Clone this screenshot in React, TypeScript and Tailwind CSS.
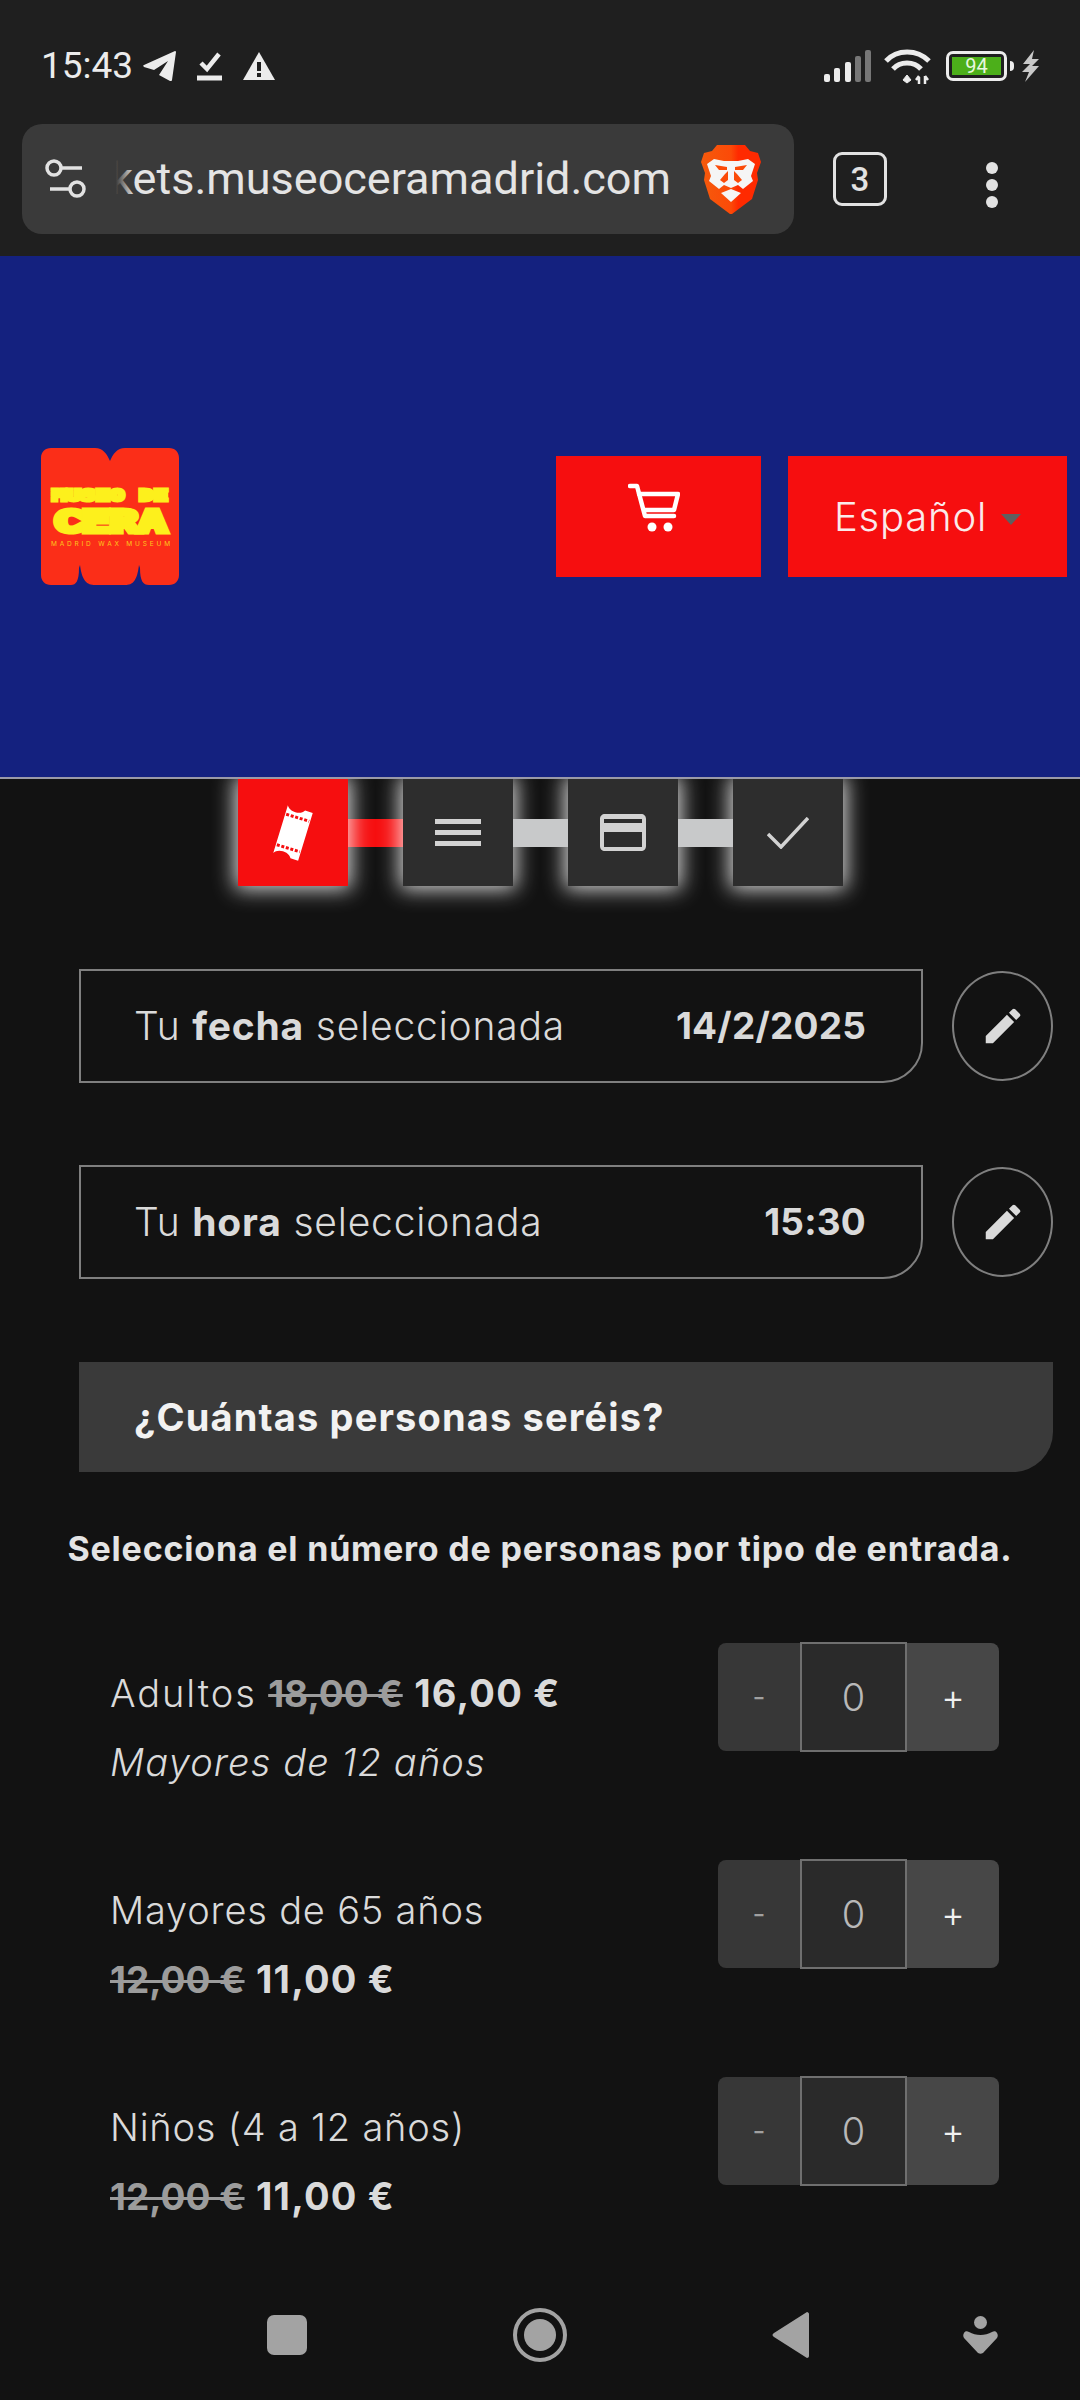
import { MdEdit } from "react-icons/md";

const StatusBar = () => (
  <div className="flex h-[124px] items-start justify-between pl-[41px] pr-[40px] pt-[48px]">
    <div className="flex items-center">
      <span className="font-['Roboto',sans-serif] text-[37px] leading-[36px] text-[#ececec]">15:43</span>
      <svg className="ml-[10px]" width="33" height="30" viewBox="0 0 33 30" fill="#ececec">
        <path d="M1 14 L32 0 C33 0 33 1 33 1 L29 29 C29 30 28 30 27 30 L16 24 L25 10 L11 19 L1 16 C0 15 0 14 1 14 Z" />
      </svg>
      <svg className="ml-[21px]" width="25" height="30" viewBox="0 0 25 30" fill="none" stroke="#ececec">
        <path d="M4 12 L10 18 L22 3" strokeWidth="4.5" />
        <path d="M0 27 H25" strokeWidth="5" />
      </svg>
      <svg className="ml-[21px]" width="32" height="28" viewBox="0 0 32 28">
        <path d="M16 0 L32 28 H0 Z" fill="#ececec" />
        <path d="M14 10 H18 V19 H14 Z M14 21 H18 V25 H14 Z" fill="#1f1f1f" />
      </svg>
    </div>
    <div className="flex items-center">
      <svg width="47" height="32" viewBox="0 0 47 32">
        <rect x="0" y="24" width="6" height="8" rx="2" fill="#ececec" />
        <rect x="10" y="18" width="6" height="14" rx="2" fill="#ececec" />
        <rect x="21" y="12" width="6" height="20" rx="2" fill="#ececec" />
        <rect x="31" y="6" width="6" height="26" rx="2" fill="#777" />
        <rect x="41" y="0" width="6" height="32" rx="2" fill="#777" />
      </svg>
      <svg className="ml-[13px]" width="47" height="36" viewBox="0 0 47 36" fill="none" stroke="#ececec" strokeWidth="5">
        <path d="M2 13 C13 1 33 1 45 13" />
        <path d="M9 21 C16 13 30 13 37 21" />
        <path d="M19 32 L23 27 L27 32 L23 35 Z" fill="#ececec" strokeWidth="1" />
        <path d="M35 36 V29 M32 32 L35 28 M41 36 V28 M41 28 L44 32" strokeWidth="2.5" />
      </svg>
      <div className="ml-[15px] flex h-[30px] w-[61px] items-center justify-center rounded-[7px] border-[3px] border-[#ececec] bg-[#1f1f1f] px-[3px]">
        <div className="flex h-[18px] w-full items-center justify-center bg-[#4caf1a] font-['Roboto',sans-serif] text-[20px] leading-none text-[#e8f8e0]">
          94
        </div>
      </div>
      <div className="ml-[3px] h-[10px] w-[4px] rounded-r-sm bg-[#ececec]" />
      <svg className="ml-[8px]" width="18" height="32" viewBox="0 0 18 32" fill="#c8c8c8">
        <path d="M12 0 L1 14 H8 L0 22 H7 L3 32 L17 16 H10 L17 9 H10 Z" />
      </svg>
    </div>
  </div>
);

const BraveLion = () => (
  <svg className="shrink-0" width="60" height="71" viewBox="0 0 60 71">
    <defs>
      <linearGradient id="shield" x1="0" x2="1" y1="0" y2="0">
        <stop offset="0" stopColor="#f55a0c" />
        <stop offset="0.5" stopColor="#fb4a08" />
        <stop offset="0.62" stopColor="#ff2a00" />
        <stop offset="1" stopColor="#ff2a00" />
      </linearGradient>
    </defs>
    <path
      d="M16 1 H44 L49 7 L57 9 L60 18 L56 29 L57 36 L51 55 L31 70 H29 L9 55 L3 36 L4 29 L0 18 L3 9 L11 7 Z"
      fill="url(#shield)"
    />
    <path d="M6 20 L13 15 L23 17 H37 L47 15 L54 20 L50 32 L52 37 L42 45 L37 41 L30 44 L23 41 L18 45 L8 37 L10 32 Z" fill="#f5f5f5" />
    <path d="M14 21 L26 23 L26 26 L18 26 Z M46 21 L34 23 L34 26 L42 26 Z" fill="#fb4a08" />
    <path d="M24 30 L27 27 V36 L23 39 L19 36 Z M36 30 L33 27 V36 L37 39 L41 36 Z" fill="#fb4a08" />
    <path d="M20 49 L30 45 L40 49 L30 58 Z" fill="#f5f5f5" />
  </svg>
);

const BrowserBar = () => (
  <div className="flex h-[132px] items-start pl-[22px]">
    <div className="flex h-[110px] w-[772px] items-center rounded-[20px] bg-[#3a3a3a]">
      <svg className="ml-[23px] shrink-0" width="42" height="42" viewBox="0 0 42 42" fill="none" stroke="#e2e2e2" strokeWidth="3.5">
        <circle cx="9" cy="10" r="7" />
        <path d="M17 10 H37" />
        <circle cx="32" cy="31" r="7" />
        <path d="M5 31 H25" />
      </svg>
      <div className="relative ml-[21px] flex h-[60px] w-[563px] items-center justify-end">
        <span className="whitespace-nowrap font-['Roboto',sans-serif] text-[45px] leading-[60px] text-[#e4e4e4]">
          kets.museoceramadrid.com
        </span>
        <div className="absolute inset-y-0 left-0 w-[26px] bg-gradient-to-r from-[#3a3a3a] from-30% to-transparent" />
      </div>
      <div className="ml-[30px]">
        <BraveLion />
      </div>
    </div>
    <div className="ml-[39px] mt-[28px] flex h-[54px] w-[54px] items-center justify-center rounded-[9px] border-[3px] border-[#e2e2e2] font-['Roboto',sans-serif] text-[33px] font-medium leading-none text-[#e2e2e2]">
      3
    </div>
    <div className="ml-[99px] mt-[38px] flex flex-col gap-[5px]">
      <div className="h-[12px] w-[12px] rounded-full bg-[#e2e2e2]" />
      <div className="h-[12px] w-[12px] rounded-full bg-[#e2e2e2]" />
      <div className="h-[12px] w-[12px] rounded-full bg-[#e2e2e2]" />
    </div>
  </div>
);

const Logo = () => (
  <svg className="shrink-0" width="138" height="137" viewBox="0 0 138 137">
    <path
      d="M10 0 H54 C62 0 66 6 69 13 C72 6 76 0 84 0 H128 C134 0 138 4 138 10 V127 C138 133 134 137 128 137 H108 C102 137 99 133 99 120 L98 117 C96 133 92 137 84 137 H54 C46 137 41 133 39 117 L38 120 C38 133 35 137 30 137 H10 C4 137 0 133 0 127 V10 C0 4 4 0 10 0 Z"
      fill="#fb2e18"
    />
    <text x="11" y="52.5" textLength="116" lengthAdjust="spacingAndGlyphs" fontFamily="'DejaVu Sans Mono'" fontWeight="700" fontSize="15" fill="#fdf01c" stroke="#fdf01c" strokeWidth="3">
      MUSEO DE
    </text>
    <text x="12.5" y="83.5" textLength="113" lengthAdjust="spacingAndGlyphs" fontFamily="'DejaVu Sans Mono'" fontWeight="700" fontSize="30" fill="#fdf01c" stroke="#fdf01c" strokeWidth="5">
      CERA
    </text>
    <text x="10" y="98" textLength="119" lengthAdjust="spacing" fontFamily="'Inter'" fontSize="6.5" fill="#fdc81c">
      MADRID WAX MUSEUM
    </text>
  </svg>
);

const Header = () => (
  <header className="relative z-20 flex h-[523px] shrink-0 items-center justify-between border-b-2 border-[#9a9aa8] bg-[#14217f] pl-[41px] pr-[13px]">
    <Logo />
    <div className="flex items-center gap-[27px]">
      <button className="flex h-[121px] w-[205px] items-start justify-center bg-[#f60e0f] pr-[10px] pt-[27px]">
        <svg width="52" height="50" viewBox="0 0 52 50" fill="none" stroke="#fff" strokeWidth="4.5" strokeLinecap="round" strokeLinejoin="round">
          <path d="M2 3 H9 L17 33 H46" />
          <path d="M11 11 H50 L46 27 H16" />
          <circle cx="24" cy="44" r="4.5" fill="#fff" stroke="none" />
          <circle cx="40" cy="44" r="4.5" fill="#fff" stroke="none" />
        </svg>
      </button>
      <button className="flex h-[121px] w-[279px] items-center justify-center font-['Inter',sans-serif] bg-[#f60e0f] text-[40px] font-light tracking-[0.8px] text-[#fbeaea]">
        Español
        <span className="ml-[14px] mt-[6px] h-0 w-0 border-x-[10px] border-t-[11px] border-x-transparent border-t-[#5f5f5f]" />
      </button>
    </div>
  </header>
);

const StepSquare = ({ active, children }: { active?: boolean; children: React.ReactNode }) => (
  <div
    className={
      active
        ? "relative z-10 flex h-[107px] w-[110px] items-center justify-center bg-[#f60e0f] shadow-[0_0_20px_3px_rgba(255,255,255,0.85)]"
        : "relative z-10 flex h-[107px] w-[110px] items-center justify-center bg-[#2d2d2d] shadow-[0_0_20px_3px_rgba(255,255,255,0.85)]"
    }
  >
    {children}
  </div>
);

const Stepper = () => (
  <div className="flex shrink-0 items-center justify-center">
    <StepSquare active>
      <svg width="42" height="56" viewBox="0 0 42 54">
        <g transform="rotate(17 21 27)">
          <path d="M8 2 C11 8 23 8 26 2 L34 2 V52 L26 52 C23 46 11 46 8 52 L8 52 Z" fill="#fff" />
          <path d="M9 11 H33 M9 43 H33" stroke="#f60e0f" strokeWidth="3" strokeDasharray="3 1.7" />
        </g>
      </svg>
    </StepSquare>
    <div className="h-[28px] w-[55px] bg-[#f60e0f]" />
    <StepSquare>
      <div className="flex w-[46px] flex-col gap-[6px]">
        <div className="h-[5px] bg-[#d2d2d2]" />
        <div className="h-[5px] bg-[#d2d2d2]" />
        <div className="h-[5px] bg-[#d2d2d2]" />
      </div>
    </StepSquare>
    <div className="relative z-[15] h-[28px] w-[55px] bg-[#c8c9ca]" />
    <StepSquare>
      <svg width="46" height="37" viewBox="0 0 46 37">
        <path
          d="M5 0 H41 C44 0 46 2 46 5 V32 C46 35 44 37 41 37 H5 C2 37 0 35 0 32 V5 C0 2 2 0 5 0 Z M4 5 V9 H42 V5 Z M4 18 V33 H42 V18 Z"
          fillRule="evenodd"
          fill="#d2d2d2"
        />
      </svg>
    </StepSquare>
    <div className="relative z-[15] h-[28px] w-[55px] bg-[#c8c9ca]" />
    <StepSquare>
      <svg width="42" height="32" viewBox="0 0 42 32" fill="none" stroke="#d2d2d2" strokeWidth="3.5">
        <path d="M1 17 L14 30 L41 1" />
      </svg>
    </StepSquare>
  </div>
);

const Selected = ({ label, word, rest, value }: { label: string; word: string; rest: string; value: string }) => (
  <div className="flex items-center gap-[29px]">
    <div className="flex h-[114px] w-[844px] items-center justify-between rounded-br-[40px] border-2 border-[#7f7f7f] pl-[53px] pr-[55px]">
      <span className="text-[39px] font-light tracking-[0.8px] text-[#dadada]">
        {label} <b className="font-bold">{word}</b> {rest}
      </span>
      <span className="text-[37px] font-bold tracking-[0.2px] text-[#dadada]">{value}</span>
    </div>
    <div className="flex h-[110px] w-[101px] items-center justify-center rounded-[50%] border-2 border-[#7f7f7f]">
      <MdEdit size={46} color="#dadada" />
    </div>
  </div>
);

const Counter = () => (
  <div className="flex h-[110px] w-[281px] items-center">
    <div className="flex h-[108px] w-[82px] items-center justify-center rounded-l-lg bg-[#373737] text-[28px] text-[#a0a0a0]">-</div>
    <div className="flex h-[110px] w-[107px] items-center justify-center border-2 border-[#6f6f6f] bg-[#2a2a2a] text-[38px] font-light text-[#b8b8b8]">0</div>
    <div className="flex h-[108px] w-[92px] items-center justify-center rounded-r-lg bg-[#474747] text-[36px] font-light text-[#f0f0f0]">+</div>
  </div>
);

const Old = ({ children }: { children: string }) => (
  <span className="text-[37px] font-bold tracking-normal text-[#9c9c9c] line-through decoration-[3px]">{children}</span>
);

const Price = ({ children }: { children: string }) => <b className="font-bold tracking-[1.2px]">{children}</b>;

const Row = ({ line1, line2 }: { line1: React.ReactNode; line2: React.ReactNode }) => (
  <div className="flex h-[217px] shrink-0 items-start justify-between pl-[110px] pr-[81px]">
    <div className="flex flex-col pt-[17px] text-[38px] font-light leading-[69px] tracking-[0.8px] text-[#dadada]">
      <div>{line1}</div>
      <div>{line2}</div>
    </div>
    <Counter />
  </div>
);

const NavBar = () => (
  <div className="mt-auto flex h-[106px] shrink-0 items-center pb-[24px] pl-[267px]">
    <div className="h-[40px] w-[40px] rounded-[7px] bg-[#a3a3a3]" />
    <svg className="ml-[206px]" width="54" height="54" viewBox="0 0 54 54">
      <circle cx="27" cy="27" r="25" fill="none" stroke="#a3a3a3" strokeWidth="4" />
      <circle cx="27" cy="27" r="16" fill="#a3a3a3" />
    </svg>
    <svg className="ml-[205px]" width="37" height="46" viewBox="0 0 37 46">
      <path d="M35 0 C36 0 37 1 37 2 V44 C37 45 36 46 35 46 L2 25 C0 24 0 22 2 21 Z" fill="#a3a3a3" />
    </svg>
    <svg className="ml-[154px]" width="35" height="38" viewBox="0 0 35 38" fill="#a3a3a3">
      <ellipse cx="17.5" cy="6.5" rx="6.5" ry="6.5" />
      <path d="M1 17 C2 15 4 15 6 16 C13 20 22 20 29 16 C31 15 33 15 34 17 C35 19 35 20 34 22 L20 37 C18 38 17 38 15 37 L1 22 C0 20 0 19 1 17 Z" />
    </svg>
  </div>
);

export default function App() {
  return (
    <div className="flex h-[2400px] w-[1080px] flex-col overflow-hidden bg-[#121212] font-['Inter',sans-serif]">
      <div className="shrink-0 bg-[#1f1f1f]">
        <StatusBar />
        <BrowserBar />
      </div>
      <Header />
      <Stepper />
      <div className="mt-[83px] flex shrink-0 flex-col gap-[82px] pl-[79px]">
        <Selected label="Tu" word="fecha" rest="seleccionada" value="14/2/2025" />
        <Selected label="Tu" word="hora" rest="seleccionada" value="15:30" />
      </div>
      <div className="ml-[79px] mt-[83px] flex h-[110px] w-[974px] shrink-0 items-center rounded-br-[40px] bg-[#3a3a3a] pl-[55px] text-[38px] font-bold tracking-[1.15px] text-[#f2f2f2]">
        ¿Cuántas personas seréis?
      </div>
      <p className="mt-[55px] shrink-0 whitespace-nowrap text-center text-[34px] font-bold leading-[44px] tracking-[0.8px] text-[#e4e4e4]">
        Selecciona el número de personas por tipo de entrada.
      </p>
      <div className="mt-[71px] flex shrink-0 flex-col">
        <Row
          line1={
            <>
              <span className="tracking-[1.9px]">Adultos</span> <Old>18,00 €</Old> <Price>16,00 €</Price>
            </>
          }
          line2={<i className="tracking-[1.1px]">Mayores de 12 años</i>}
        />
        <Row
          line1="Mayores de 65 años"
          line2={
            <>
              <Old>12,00 €</Old> <Price>11,00 €</Price>
            </>
          }
        />
        <Row
          line1="Niños (4 a 12 años)"
          line2={
            <>
              <Old>12,00 €</Old> <Price>11,00 €</Price>
            </>
          }
        />
      </div>
      <NavBar />
    </div>
  );
}
